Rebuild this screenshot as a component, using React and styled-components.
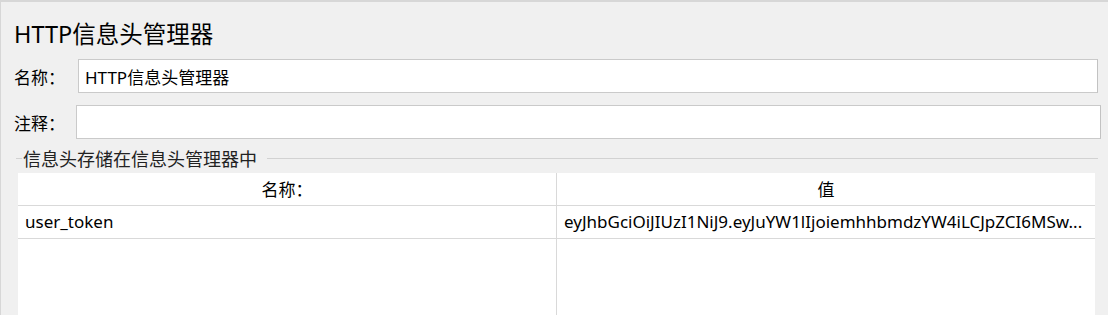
import React from 'react';
import styled, { createGlobalStyle } from 'styled-components';

const GlobalStyle = createGlobalStyle`
  html, body {
    margin: 0;
    padding: 0;
    background: #f0f0f0;
  }
  * {
    box-sizing: border-box;
  }
`

const FONT = `"Segoe UI", "Noto Sans", "Noto Sans CJK SC", sans-serif`

const PanelStyled = styled.div`
  width: 1108px;
  height: 315px;
  overflow: hidden;
  background: #f0f0f0;
  border-top: 2px solid #d7d7d7;
  border-left: 1px solid #d7d7d7;
  font-family: ${FONT};
  color: #000;
`
const TitleStyled = styled.h1`
  margin: 17px 0 0 13px;
  height: 30px;
  line-height: 30px;
  font-size: 23.5px;
  font-weight: 400;
`
const FieldRowStyled = styled.div`
  display: flex;
  align-items: center;
  padding-left: 13px;
  margin-top: ${p => p.$top}px;
  padding-right: ${p => p.$right}px;
`
const FieldLabelStyled = styled.label`
  width: ${p => p.$width}px;
  font-size: 17px;
  flex-shrink: 0;
`
const FieldInputStyled = styled.input`
  flex: 1;
  height: 34px;
  padding: 0 6px;
  border: 1px solid #cacaca;
  border-right-color: #c2c2c2;
  background: #fff;
  font-family: ${FONT};
  font-size: 17px;
  color: #000;
  outline: none;
`
const GroupHeaderStyled = styled.div`
  display: flex;
  align-items: center;
  height: 20px;
  margin: 9px 10px 0 15px;
`
const GroupLineStyled = styled.span`
  flex: ${p => (p.$grow ? 1 : 'none')};
  width: ${p => (p.$grow ? 'auto' : '6px')};
  height: 1px;
  background: #d2d2d2;
`
const GroupTitleStyled = styled.span`
  font-size: 18px;
  color: #222;
  padding: 0 10px 0 1px;
  white-space: nowrap;
`
const TableStyled = styled.table`
  margin: 5px 0 0 17px;
  width: 1077px;
  border-collapse: collapse;
  table-layout: fixed;
  background: #fff;
  font-size: 17px;
`
const HeadCellStyled = styled.th`
  height: 32px;
  padding: 0;
  font-weight: 400;
  text-align: center;
  border-bottom: 1px solid #d9d9d9;
  border-left: ${p => (p.$divider ? '1px solid #d9d9d9' : 'none')};
`
const CellStyled = styled.td`
  height: ${p => p.$height || 33}px;
  padding: 0 0 0 7px;
  white-space: nowrap;
  overflow: hidden;
  text-overflow: ellipsis;
  vertical-align: middle;
  border-bottom: ${p => (p.$filler ? 'none' : '1px solid #d9d9d9')};
  border-left: ${p => (p.$divider ? '1px solid #d9d9d9' : 'none')};
`

const headers = [
  { name: 'user_token', value: 'eyJhbGciOiJIUzI1NiJ9.eyJuYW1lIjoiemhhbmdzYW4iLCJpZCI6MSw...' },
]

const App = () => {
  return (
    <>
      <GlobalStyle />
      <PanelStyled>
        <TitleStyled>HTTP信息头管理器</TitleStyled>
        <FieldRowStyled $top={10} $right={10}>
          <FieldLabelStyled $width={64}>名称：</FieldLabelStyled>
          <FieldInputStyled defaultValue="HTTP信息头管理器" />
        </FieldRowStyled>
        <FieldRowStyled $top={12} $right={7}>
          <FieldLabelStyled $width={62}>注释：</FieldLabelStyled>
          <FieldInputStyled defaultValue="" />
        </FieldRowStyled>
        <GroupHeaderStyled>
          <GroupLineStyled />
          <GroupTitleStyled>信息头存储在信息头管理器中</GroupTitleStyled>
          <GroupLineStyled $grow />
        </GroupHeaderStyled>
        <TableStyled>
          <thead>
            <tr>
              <HeadCellStyled>名称：</HeadCellStyled>
              <HeadCellStyled $divider>值</HeadCellStyled>
            </tr>
          </thead>
          <tbody>
            {headers.map(h => (
              <tr key={h.name}>
                <CellStyled>{h.name}</CellStyled>
                <CellStyled $divider>{h.value}</CellStyled>
              </tr>
            ))}
            <tr>
              <CellStyled $filler $height={120}></CellStyled>
              <CellStyled $filler $divider $height={120}></CellStyled>
            </tr>
          </tbody>
        </TableStyled>
      </PanelStyled>
    </>
  )
}

export default App
